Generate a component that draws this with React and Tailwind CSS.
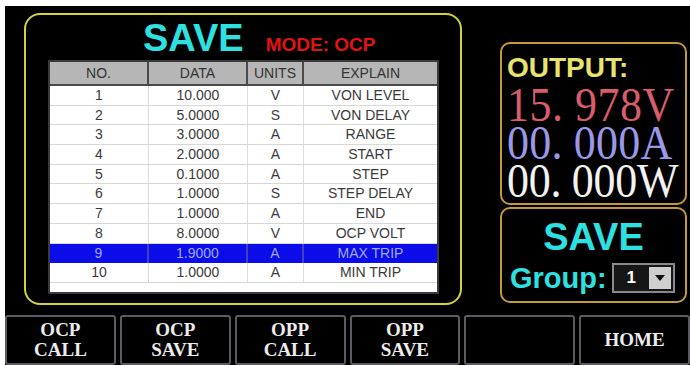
import React from "react";

const rows = [
  ["1", "10.000", "V", "VON LEVEL"],
  ["2", "5.0000", "S", "VON DELAY"],
  ["3", "3.0000", "A", "RANGE"],
  ["4", "2.0000", "A", "START"],
  ["5", "0.1000", "A", "STEP"],
  ["6", "1.0000", "S", "STEP DELAY"],
  ["7", "1.0000", "A", "END"],
  ["8", "8.0000", "V", "OCP VOLT"],
  ["9", "1.9000", "A", "MAX TRIP"],
  ["10", "1.0000", "A", "MIN TRIP"],
];

const sans = { fontFamily: '"Liberation Sans", Arial, sans-serif' };
const serif = { fontFamily: '"Liberation Serif", "Times New Roman", serif' };
const tahoma = { fontFamily: '"Liberation Sans", Tahoma, sans-serif' };

function Btn({ l1, l2 }) {
  return (
    <div
      className="border-2 border-[#5a5a60] rounded-[3px] bg-black flex flex-col items-center justify-center text-[#ececec] font-bold text-[19px] leading-[20px]"
      style={serif}
    >
      {l1 && <span>{l1}</span>}
      {l2 && <span>{l2}</span>}
    </div>
  );
}

export default function App() {
  return (
    <div className="w-[690px] h-[365px] bg-white pt-[6px] pl-[5px] overflow-hidden">
      <div className="bg-black w-[685px] h-[359px] flex flex-col">
        <div className="flex h-[309px]">
          {/* main panel */}
          <div className="ml-[19px] mt-[7px] w-[438px] h-[292px] border-2 border-[#d2d23a] rounded-[16px] flex flex-col">
            <div className="flex items-baseline pl-[117px] mt-[4px] h-[38px]" style={sans}>
              <span className="text-[38px] leading-[38px] font-bold text-[#2ee0e0]">SAVE</span>
              <span className="ml-[22px] text-[19px] leading-[19px] font-bold text-[#e01414]">MODE: OCP</span>
            </div>
            <div className="ml-[22px] mt-[3px] w-[391px] h-[234px] border-2 border-[#3a3a3a] bg-white flex flex-col" style={tahoma}>
              <div className="grid grid-cols-[99px_99px_56px_133px] h-[24px] shrink-0 bg-[#b6b6b6] border-b-2 border-[#4a4a4a] text-[14px] text-[#333] leading-[22px]">
                <div className="text-center border-r-2 border-[#4a4a4a]">NO.</div>
                <div className="text-center border-r-2 border-[#4a4a4a]">DATA</div>
                <div className="text-center border-r-2 border-[#4a4a4a]">UNITS</div>
                <div className="text-center">EXPLAIN</div>
              </div>
              {rows.map((r) => {
                const sel = r[0] === "9";
                return (
                  <div
                    key={r[0]}
                    className={
                      sel
                        ? "grid grid-cols-[99px_99px_56px_133px] h-[19.7px] shrink-0 bg-[#0c0ce8] text-[#9eaaff] text-[14px] leading-[19px]"
                        : "grid grid-cols-[99px_99px_56px_133px] h-[19.7px] shrink-0 border-b border-[#d8d8d8] text-[#3a3a3a] text-[14px] leading-[18px]"
                    }
                  >
                    <div className={sel ? "text-center border-r-2 border-[#4040c0]" : "text-center border-r border-[#dcdcdc]"}>{r[0]}</div>
                    <div className={sel ? "text-center border-r-2 border-[#4040c0]" : "text-center border-r border-[#dcdcdc]"}>{r[1]}</div>
                    <div className={sel ? "text-center border-r-2 border-[#4040c0]" : "text-center border-r border-[#dcdcdc]"}>{r[2]}</div>
                    <div className="text-center">{r[3]}</div>
                  </div>
                );
              })}
            </div>
          </div>
          {/* right column */}
          <div className="ml-[38px] mt-[36px] w-[187px] flex flex-col gap-[2px]">
            <div className="h-[163px] border-2 border-[#c49a34] rounded-[10px] pl-[5px] pt-[10px] flex flex-col overflow-hidden">
              <div className="text-[28px] leading-[28px] font-bold text-[#e6e46e]" style={sans}>OUTPUT:</div>
              <div className="mt-[5px] flex flex-col" style={serif}>
                <div className="text-[44px] leading-[38px] tracking-[0.5px] text-[#d85c6c] whitespace-pre origin-left scale-y-[1.1]">15. 978V</div>
                <div className="text-[44px] leading-[38px] tracking-[0.2px] text-[#9c98e8] whitespace-pre origin-left scale-y-[1.1]">00. 000A</div>
                <div className="text-[44px] leading-[37px] tracking-[-0.3px] text-[#f2f2f2] whitespace-pre origin-left scale-y-[1.1]">00. 000W</div>
              </div>
            </div>
            <div className="h-[96px] border-2 border-[#c49a34] rounded-[10px] pt-[9px] flex flex-col" style={sans}>
              <div className="text-center text-[38px] leading-[38px] font-bold text-[#2ee0e0]">SAVE</div>
              <div className="flex items-center mt-[7px] pl-[8px]">
                <span className="text-[29px] leading-[30px] font-bold text-[#2ee0e0]">Group:</span>
                <div className="ml-[5px] w-[63px] h-[30px] border-2 border-[#8a8a8a] bg-[#161616] flex items-center">
                  <span className="flex-1 text-center text-white font-bold text-[17px]">1</span>
                  <div className="w-[22px] h-[22px] mr-[2px] bg-[#cfcfcf] flex items-center justify-center">
                    <svg width="12" height="8" viewBox="0 0 12 8">
                      <polygon points="1,1 11,1 6,7" fill="#111" />
                    </svg>
                  </div>
                </div>
              </div>
            </div>
          </div>
        </div>
        {/* bottom buttons */}
        <div className="grid grid-cols-6 gap-[4px] h-[50px]">
          <Btn l1="OCP" l2="CALL" />
          <Btn l1="OCP" l2="SAVE" />
          <Btn l1="OPP" l2="CALL" />
          <Btn l1="OPP" l2="SAVE" />
          <Btn />
          <Btn l1="HOME" />
        </div>
      </div>
    </div>
  );
}
